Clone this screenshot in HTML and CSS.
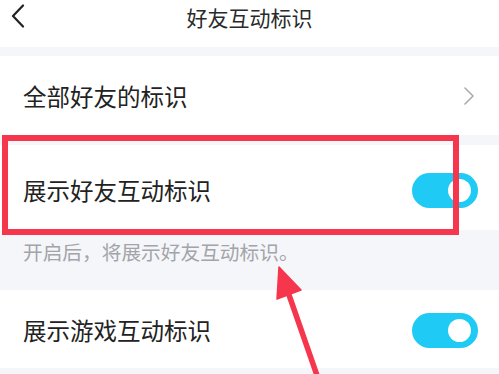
FILE: index.html
```html
<!DOCTYPE html>
<html lang="zh-CN">
<head>
<meta charset="utf-8">
<title>好友互动标识</title>
<link rel="stylesheet" href="styles.css">
</head>
<body>
<div class="page">
  <header class="header">
    <svg class="back" width="14" height="24" viewBox="0 0 14 24"><path d="M12 1.5 L2 12 L12 22.5" fill="none" stroke="#222" stroke-width="2.2" stroke-linecap="round" stroke-linejoin="round"/></svg>
    <div class="title">好友互动标识</div>
  </header>
  <div class="row row1">
    <span class="label">全部好友的标识</span>
    <svg class="chev" width="12" height="18" viewBox="0 0 12 18"><path d="M2 1 L10 9 L2 17" fill="none" stroke="#aaa" stroke-width="1.6" stroke-linecap="round" stroke-linejoin="round"/></svg>
  </div>
  <div class="row row2">
    <span class="label">展示好友互动标识</span>
    <span class="toggle"><span class="knob"></span></span>
  </div>
  <div class="desc">开启后，将展示好友互动标识。</div>
  <div class="row row3">
    <span class="label">展示游戏互动标识</span>
    <span class="toggle"><span class="knob"></span></span>
  </div>
  <div class="highlight"></div>
  <svg class="arrow" width="499" height="374" viewBox="0 0 499 374">
    <line x1="320" y1="384" x2="288" y2="292" stroke="#f5364d" stroke-width="5.5" stroke-linecap="round"/>
    <polygon points="279,267 301,290 277,299" fill="#f5364d" stroke="#f5364d" stroke-width="1.5" stroke-linejoin="round"/>
  </svg>
</div>
</body>
</html>
```
FILE: styles.css
```css
html, body {
  margin: 0;
  padding: 0;
}
body {
  background: #f5f6f9;
  font-family: "Noto Sans CJK SC", "Noto Sans", sans-serif;
  color: #222;
}
.page {
  position: relative;
  width: 499px;
  height: 374px;
  overflow: hidden;
  display: flex;
  flex-direction: column;
}
.header {
  height: 47px;
  background: #fff;
  display: flex;
  align-items: flex-start;
  justify-content: center;
  position: relative;
  flex-shrink: 0;
}
.back {
  position: absolute;
  left: 11px;
  top: 4px;
}
.title {
  font-size: 21px;
  line-height: 35px;
  color: #2a2a2a;
}
.row {
  background: #fff;
  display: flex;
  align-items: center;
  justify-content: space-between;
  padding: 0 21px 0 23px;
  flex-shrink: 0;
}
.row1 {
  margin-top: 9px;
  height: 79px;
  padding-right: 24px;
}
.row2 {
  margin-top: 10px;
  height: 85px;
  padding-top: 5px;
  box-sizing: border-box;
}
.row3 {
  height: 78px;
  padding-top: 2px;
  box-sizing: border-box;
}
.label {
  font-size: 23.5px;
  line-height: 30px;
}
.desc {
  height: 60px;
  padding-left: 23px;
  font-size: 19.7px;
  line-height: 26px;
  padding-top: 9px;
  box-sizing: border-box;
  color: #a3a4a9;
  flex-shrink: 0;
}
.toggle {
  width: 66px;
  height: 35px;
  border-radius: 18px;
  background: #1fcaf5;
  display: flex;
  align-items: center;
  justify-content: flex-end;
  padding-right: 7px;
  box-sizing: border-box;
}
.knob {
  width: 23px;
  height: 23px;
  border-radius: 50%;
  background: #fff;
}
.highlight {
  position: absolute;
  left: 2px;
  top: 135px;
  width: 445px;
  height: 88px;
  border: 6px solid #f5364d;
}
.arrow {
  position: absolute;
  left: 0;
  top: 0;
}
```
